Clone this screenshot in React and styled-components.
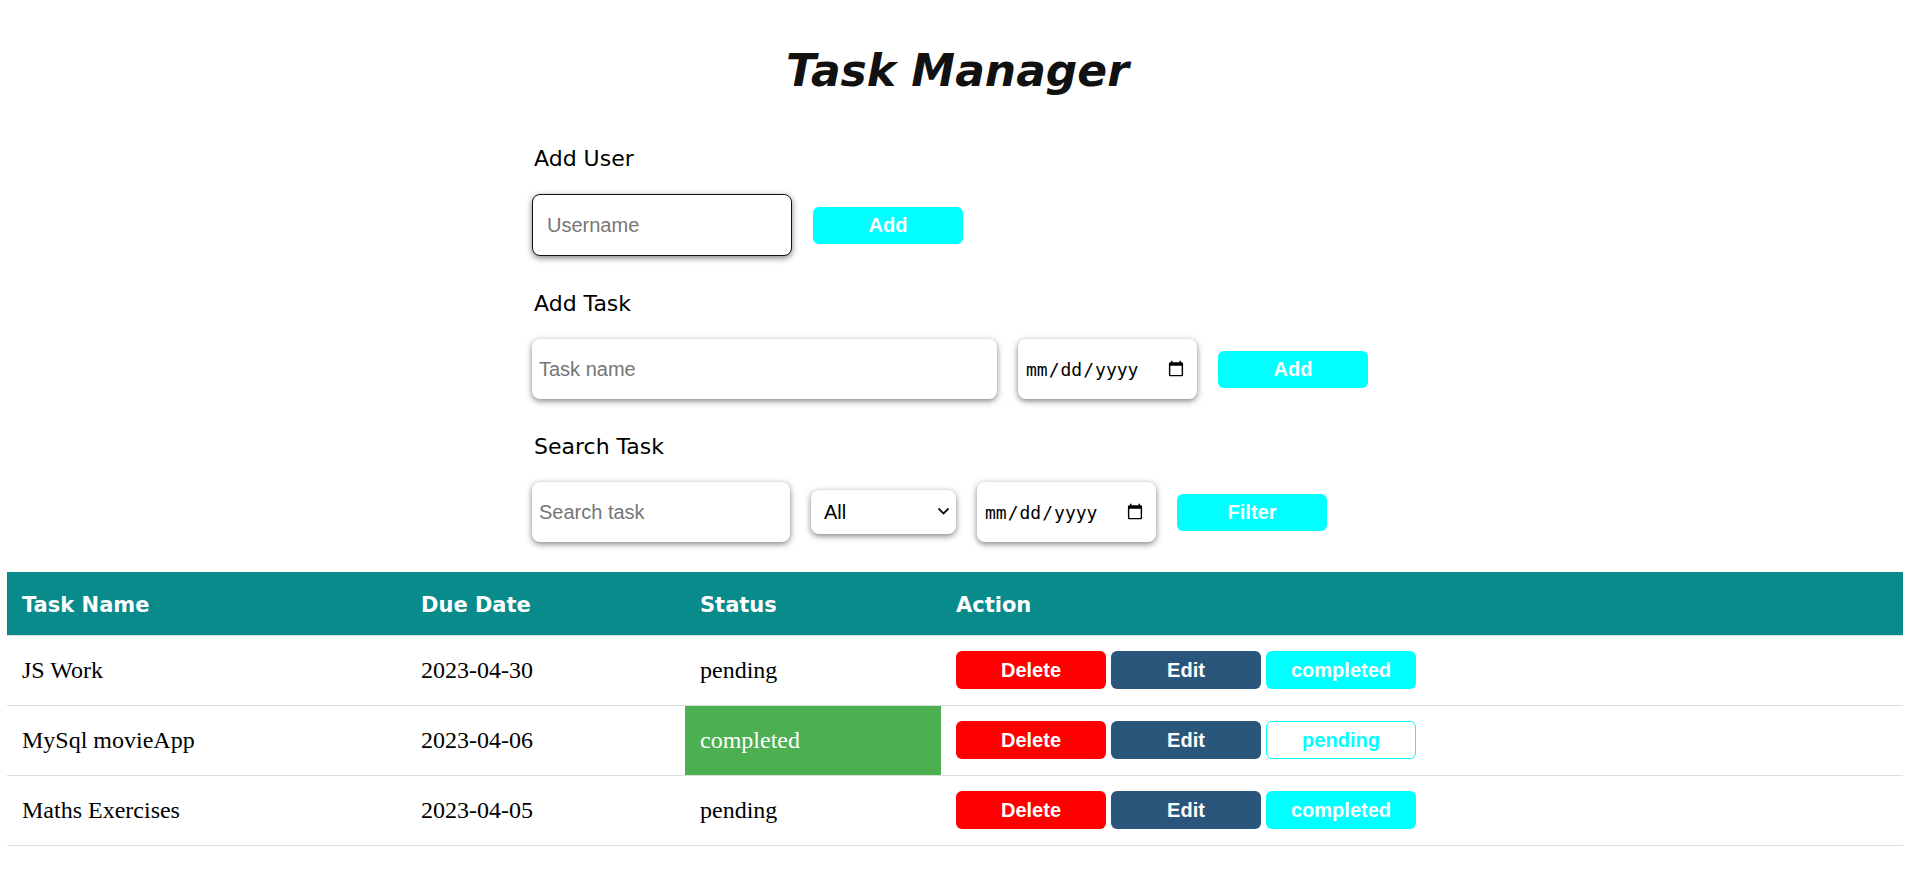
import React from "react";
import styled, { createGlobalStyle } from "styled-components";

const GlobalStyle = createGlobalStyle`
  html, body { margin: 0; padding: 0; background: #fff; }
  body { font-family: "Comic Sans MS", "Comic Neue", "DejaVu Sans", sans-serif; color: #000; }
  * { box-sizing: border-box; }
`;

const Page = styled.div`
  padding-top: 41px;
`;

const Title = styled.h1`
  margin: 0;
  height: 60px;
  line-height: 60px;
  text-align: center;
  font-family: "Comic Sans MS", "DejaVu Sans", sans-serif;
  font-style: italic;
  font-weight: bold;
  font-size: 44px;
  color: #111;
`;

const FormArea = styled.div`
  width: 851px;
  margin: 42px auto 0;
  display: flex;
  flex-direction: column;
`;

const Label = styled.h3`
  margin: ${(p) => (p.$first ? "0" : "32px")} 0 21px 2px;
  height: 30px;
  line-height: 32px;
  font-size: 22px;
  font-weight: normal;
  font-family: "Comic Sans MS", "DejaVu Sans", sans-serif;
`;

const FormRow = styled.div`
  display: flex;
  align-items: center;
  gap: 21px;
`;

const TextInput = styled.input`
  width: ${(p) => p.$w}px;
  height: ${(p) => (p.$focused ? 62 : 60)}px;
  padding: 0 0 0 ${(p) => (p.$focused ? 14 : 7)}px;
  border: ${(p) => (p.$focused ? "1.5px solid #111" : "none")};
  border-radius: 8px;
  background: #fff;
  box-shadow: 0 2px 6px rgba(0, 0, 0, 0.5);
  font-family: "Liberation Sans", Arial, sans-serif;
  font-size: 20px;
  color: #000;
  outline: none;
  &::placeholder { color: #767676; }
`;

const DateInput = styled.input`
  width: 179px;
  height: 60px;
  padding: 0 10px 0 7px;
  border: none;
  border-radius: 8px;
  background: #fff;
  box-shadow: 0 2px 6px rgba(0, 0, 0, 0.5);
  font-family: "DejaVu Sans Mono", "Liberation Mono", monospace;
  font-size: 18px;
  color: #000;
  outline: none;
`;

const SelectWrap = styled.div`
  position: relative;
  width: 145px;
  height: 44px;
`;

const Select = styled.select`
  appearance: none;
  -webkit-appearance: none;
  width: 100%;
  height: 100%;
  padding: 0 0 0 13px;
  border: none;
  border-radius: 8px;
  background: #fff;
  box-shadow: 0 2px 6px rgba(0, 0, 0, 0.5);
  font-family: "Liberation Sans", Arial, sans-serif;
  font-size: 20px;
  color: #000;
  outline: none;
`;

const Chevron = styled.svg`
  position: absolute;
  right: 6px;
  top: 17px;
  width: 13px;
  height: 9px;
  pointer-events: none;
`;

const AddButton = styled.button`
  width: 150px;
  height: 37px;
  border: none;
  border-radius: 6px;
  background: #00ffff;
  color: #fff;
  font-family: "Liberation Sans", Arial, sans-serif;
  font-weight: bold;
  font-size: 20px;
  cursor: pointer;
`;

const TableWrap = styled.div`
  padding: 30px 12px 0 7px;
`;

const Table = styled.table`
  width: 100%;
  border-collapse: collapse;
  table-layout: fixed;
`;

const HeadCell = styled.th`
  width: ${(p) => (p.$w ? `${p.$w}px` : "auto")};
  height: 63px;
  padding: 4px 0 0 15px;
  background: #0a8b8b;
  color: #fff;
  text-align: left;
  font-family: "Comic Sans MS", "DejaVu Sans", sans-serif;
  font-weight: bold;
  font-size: 21px;
  border-bottom: 1px solid #ddd;
`;

const Row = styled.tr`
  border-bottom: 1px solid #ddd;
`;

const Cell = styled.td`
  height: 70px;
  padding: 0 0 0 15px;
  font-family: "Liberation Serif", "Times New Roman", serif;
  font-size: 24px;
  background: ${(p) => (p.$done ? "#4caf50" : "transparent")};
  color: ${(p) => (p.$done ? "#fff" : "#000")};
`;

const Actions = styled.div`
  display: flex;
  gap: 5px;
`;

const ActionButton = styled.button`
  width: 150px;
  height: 38px;
  border-radius: 6px;
  border: ${(p) => (p.$variant === "outline" ? "1px solid #00ffff" : "none")};
  background: ${(p) =>
    p.$variant === "delete"
      ? "#ff0000"
      : p.$variant === "edit"
      ? "#29567a"
      : p.$variant === "outline"
      ? "#fff"
      : "#00ffff"};
  color: ${(p) => (p.$variant === "outline" ? "#00ffff" : "#fff")};
  font-family: "Liberation Sans", Arial, sans-serif;
  font-weight: bold;
  font-size: 20px;
  cursor: pointer;
`;

const tasks = [
  { name: "JS Work", date: "2023-04-30", status: "pending" },
  { name: "MySql movieApp", date: "2023-04-06", status: "completed" },
  { name: "Maths Exercises", date: "2023-04-05", status: "pending" },
];

export default function App() {
  return (
    <>
      <GlobalStyle />
      <Page>
        <Title>Task Manager</Title>
        <FormArea>
          <Label $first>Add User</Label>
          <FormRow>
            <TextInput $w={260} $focused placeholder="Username" />
            <AddButton>Add</AddButton>
          </FormRow>
          <Label>Add Task</Label>
          <FormRow>
            <TextInput $w={465} placeholder="Task name" />
            <DateInput type="date" />
            <AddButton>Add</AddButton>
          </FormRow>
          <Label>Search Task</Label>
          <FormRow>
            <TextInput $w={258} placeholder="Search task" />
            <SelectWrap>
              <Select defaultValue="all">
                <option value="all">All</option>
                <option value="pending">pending</option>
                <option value="completed">completed</option>
              </Select>
              <Chevron viewBox="0 0 13 9">
                <path d="M1.5 1.5 L6.5 6.5 L11.5 1.5" fill="none" stroke="#111" strokeWidth="1.8" />
              </Chevron>
            </SelectWrap>
            <DateInput type="date" />
            <AddButton>Filter</AddButton>
          </FormRow>
        </FormArea>
        <TableWrap>
          <Table>
            <thead>
              <tr>
                <HeadCell $w={399}>Task Name</HeadCell>
                <HeadCell $w={279}>Due Date</HeadCell>
                <HeadCell $w={256}>Status</HeadCell>
                <HeadCell>Action</HeadCell>
              </tr>
            </thead>
            <tbody>
              {tasks.map((t) => {
                const done = t.status === "completed";
                return (
                  <Row key={t.name}>
                    <Cell>{t.name}</Cell>
                    <Cell>{t.date}</Cell>
                    <Cell $done={done}>{t.status}</Cell>
                    <Cell>
                      <Actions>
                        <ActionButton $variant="delete">Delete</ActionButton>
                        <ActionButton $variant="edit">Edit</ActionButton>
                        <ActionButton $variant={done ? "outline" : "toggle"}>
                          {done ? "pending" : "completed"}
                        </ActionButton>
                      </Actions>
                    </Cell>
                  </Row>
                );
              })}
            </tbody>
          </Table>
        </TableWrap>
      </Page>
    </>
  );
}
